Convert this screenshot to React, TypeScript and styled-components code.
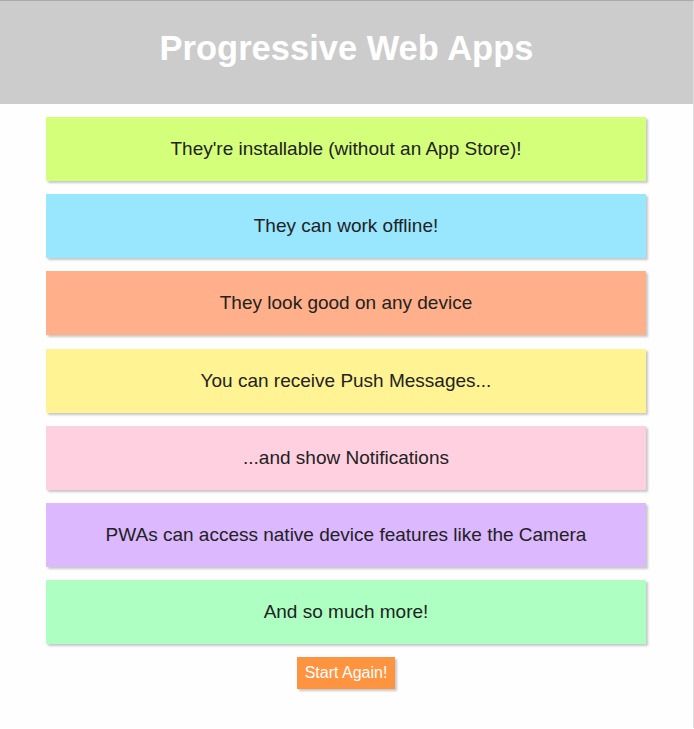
import React from 'react'
import styled, { createGlobalStyle } from 'styled-components'

const GlobalStyle = createGlobalStyle`
  html, body {
    margin: 0;
    padding: 0;
    background: #fff;
    font-family: "Liberation Sans", Arial, sans-serif;
  }
`

const Page = styled.div`
  min-height: 728px;
  border-top: 1px solid #aaa;
  border-right: 1px solid #ddd;
  box-sizing: border-box;
  background: #fefefe;
`

const Header = styled.header`
  height: 103px;
  box-sizing: border-box;
  padding-bottom: 8px;
  background: #cccccc;
  display: flex;
  align-items: center;
  justify-content: center;
`

const Title = styled.h1`
  margin: 0;
  color: #fff;
  font-size: 34.5px;
  font-weight: bold;
`

const List = styled.div`
  display: flex;
  flex-direction: column;
  align-items: center;
  gap: 13.2px;
  padding-top: 13px;
  padding-right: 1px;
`

const Card = styled.div<{ $bg: string }>`
  width: 600px;
  height: 64px;
  background: ${({ $bg }) => $bg};
  box-shadow: 2px 2px 2px #c8c8c8;
  display: flex;
  align-items: center;
  justify-content: center;
  color: #222;
  font-size: 19px;
`

const Button = styled.button`
  width: 98px;
  height: 32px;
  border: none;
  background: #ff9440;
  color: #fff;
  font-family: "Liberation Sans", Arial, sans-serif;
  font-size: 16px;
  padding: 0;
  box-shadow: 2px 2px 2px #c8c8c8;
  cursor: pointer;
`

const features = [
  { text: "They're installable (without an App Store)!", bg: '#d4ff7a' },
  { text: 'They can work offline!', bg: '#99e6ff' },
  { text: 'They look good on any device', bg: '#ffb08a' },
  { text: 'You can receive Push Messages...', bg: '#fff394' },
  { text: '...and show Notifications', bg: '#ffd0e0' },
  { text: 'PWAs can access native device features like the Camera', bg: '#dcb8ff' },
  { text: 'And so much more!', bg: '#adffc2' },
]

const App: React.FC = () => {
  return (
    <Page>
      <GlobalStyle />
      <Header>
        <Title>Progressive Web Apps</Title>
      </Header>
      <List>
        {features.map(f => (
          <Card key={f.text} $bg={f.bg}>
            {f.text}
          </Card>
        ))}
        <Button>Start Again!</Button>
      </List>
    </Page>
  )
}

export default App
